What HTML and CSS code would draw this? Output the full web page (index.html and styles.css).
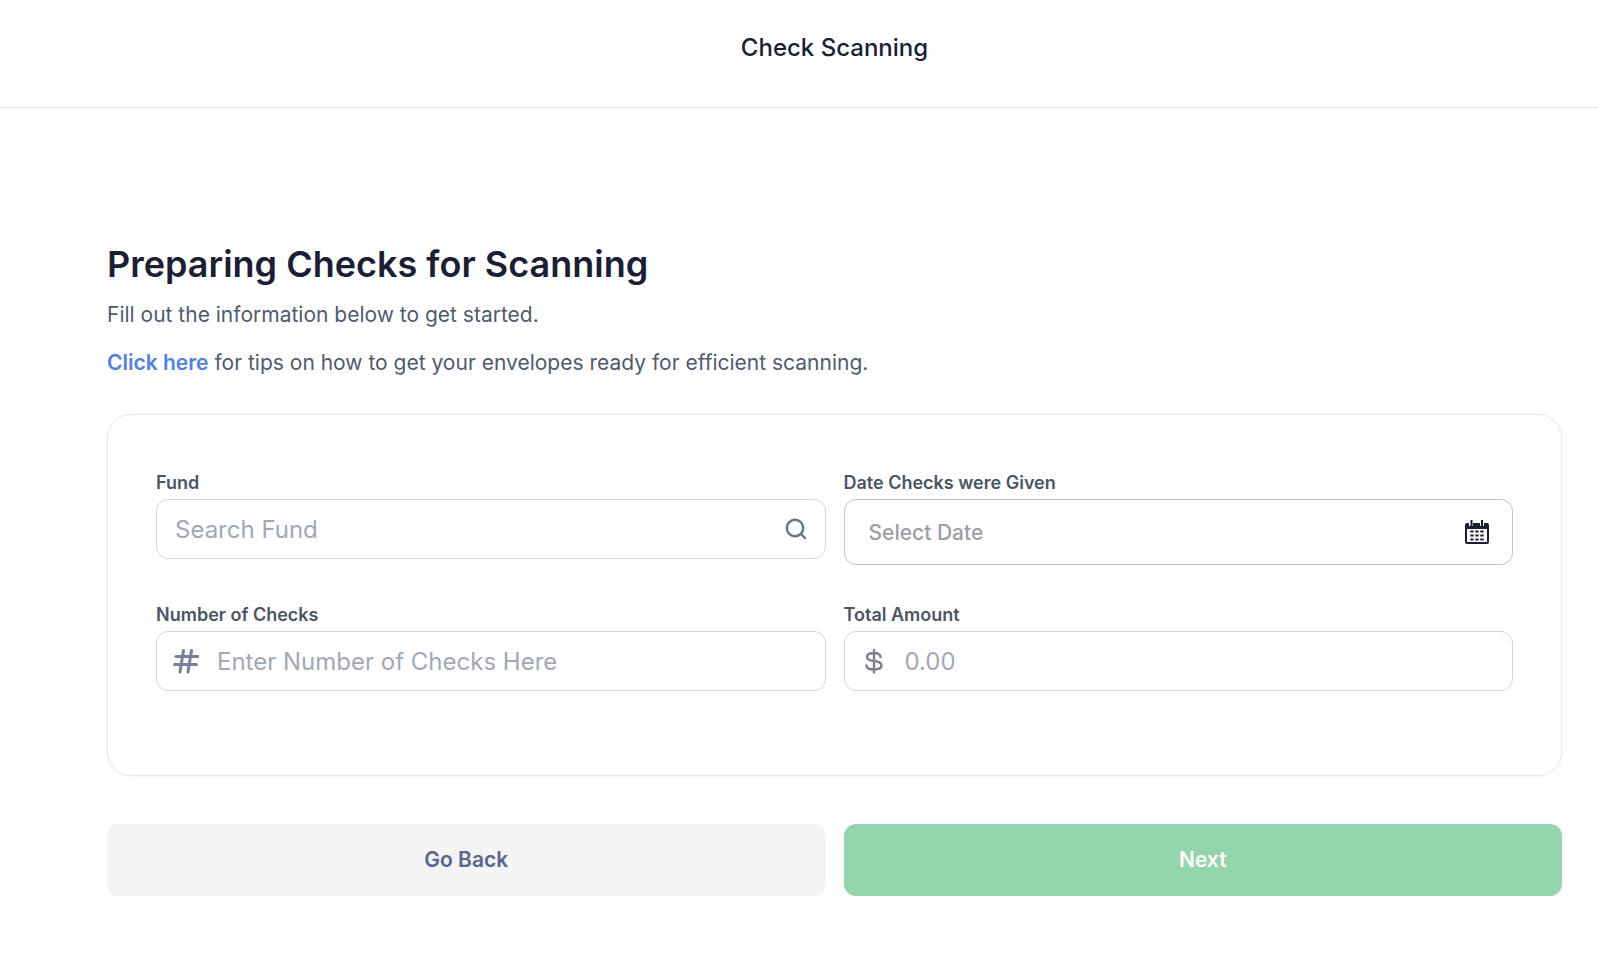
FILE: index.html
```html
<!DOCTYPE html>
<html lang="en">
<head>
<meta charset="utf-8">
<meta name="viewport" content="width=device-width, initial-scale=1">
<title>Check Scanning</title>
<link rel="stylesheet" href="styles.css">
</head>
<body>
<header class="topbar">
  <p class="topbar-title">Check Scanning</p>
</header>
<main class="page">
  <h1 class="heading">Preparing Checks for Scanning</h1>
  <p class="text">Fill out the information below to get started.</p>
  <p class="text"><a class="link" href="#tips">Click here</a> for tips on how to get your envelopes ready for efficient scanning.</p>
  <form class="form">
    <div class="card">
      <div class="field">
        <label class="label" for="fund">Fund</label>
        <div class="control control-search">
          <input class="input" id="fund" type="text" placeholder="Search Fund">
          <svg class="icon icon-search" viewBox="0 0 24 24" aria-hidden="true"><circle cx="11" cy="11" r="8.200"/><path d="M21 21l-4-4"/></svg>
        </div>
      </div>
      <div class="field">
        <label class="label" for="date">Date Checks were Given</label>
        <div class="control control-date">
          <input class="input" id="date" type="text" placeholder="Select Date">
          <svg class="icon icon-calendar" viewBox="0 0 24 24" aria-hidden="true"><path fill-rule="evenodd" d="M2 3H4V6H8V3H15V6H19V3H22Q24 3 24 5V22Q24 24 22 24H2Q0 24 0 22V5Q0 3 2 3ZM2 9V22H22V9Z"/><path d="M5.500 0H7.500V9H5.500ZM16 0H18V9H16ZM4 6H8V9H4ZM15 6H19V9H15Z"/><path class="dots" d="M5.300 11.500H19M5.300 15.500H19M5.300 19.500H19"/></svg>
        </div>
      </div>
      <div class="field">
        <label class="label" for="count">Number of Checks</label>
        <div class="control control-prefixed">
          <svg class="icon icon-hash" viewBox="0 0 26 26" aria-hidden="true"><path d="M3 8.500H25M1.500 16.500H23.500M10.500 2.500L7 24M18.500 2.500L15 24"/></svg>
          <input class="input" id="count" type="text" placeholder="Enter Number of Checks Here">
        </div>
      </div>
      <div class="field">
        <label class="label" for="amount">Total Amount</label>
        <div class="control control-prefixed">
          <svg class="icon icon-dollar" viewBox="0 0 26 26" aria-hidden="true"><path d="M13 2V24.500M19.500 9C19.500 6.500 17 5 13 5S6 6.500 6 9S8 12.500 13 13S20.500 14.500 20.500 17.500S18 21.500 13 21.500S5.500 20.500 5.500 17.500"/></svg>
          <input class="input" id="amount" type="text" placeholder="0.00">
        </div>
      </div>
    </div>
    <div class="actions">
      <button class="button button-back" type="button">Go Back</button>
      <button class="button button-next" type="submit">Next</button>
    </div>
  </form>
</main>
</body>
</html>
```
FILE: styles.css
```css
* { box-sizing: border-box; }
body { margin: 0; background: #fff; color: #1a1f36; font-family: Inter, "Liberation Sans", sans-serif; }
h1, p { margin: 0; }

.topbar { padding: 30px 0 41px 71px; border-bottom: 1px solid #e5e7eb; text-align: center; }
.topbar-title { font-size: 24px; line-height: 36px; font-weight: 500; }

.page { padding: 132px 36px 58px 107px; }
.heading { font-size: 36px; line-height: 48px; font-weight: 600; }
.text { margin-top: 12px; font-size: 21px; line-height: 36px; color: #4f5b6e; }
.heading + .text { margin-top: 9px; }
.link { color: #4f80f0; font-weight: 600; text-decoration: none; }

.card { display: grid; grid-template-columns: 1fr 1fr; gap: 36px 18px; margin-top: 33px; padding: 54px 48px 84px; border: 1px solid #e5e7eb; border-radius: 24px; box-shadow: 0 1px 3px rgba(0, 0, 0, 0.05); }
.field { display: flex; flex-direction: column; gap: 2px; min-width: 0; }
.label { align-self: flex-start; font-size: 18px; line-height: 28px; font-weight: 600; color: #4b5563; }
.control { display: flex; align-items: center; height: 60px; padding: 0 18px; border: 1px solid #d5d5d8; border-radius: 12px; }
.control-search { padding-right: 17px; }
.control-prefixed { padding-left: 16px; }
.control-date { height: 66px; padding: 0 23px 0 24px; border-color: #c0c0d0; }
.input { flex: 1; min-width: 0; padding: 2px 0 0; border: 0; outline: 0; background: transparent; color: #1a1f36; font: 400 24px/36px Inter, "Liberation Sans", sans-serif; }
.input::placeholder { color: #a1a8b6; opacity: 1; }
.control-date .input { font-size: 21px; font-weight: 500; }
.control-date .input::placeholder { color: #9d9da6; }

.icon { flex: none; fill: none; stroke-linecap: round; stroke-linejoin: round; }
.icon-search { width: 24px; height: 24px; stroke: #64748b; stroke-width: 2.4; }
.icon-calendar { width: 24px; height: 24px; fill: #1a1f36; }
.dots { stroke: #1a1f36; stroke-width: 2; stroke-linecap: butt; stroke-dasharray: 3.3 1.7; }
.icon-hash, .icon-dollar { width: 26px; height: 26px; margin-right: 18px; }
.icon-hash { stroke: #74809d; stroke-width: 3; }
.icon-dollar { stroke: #80808a; stroke-width: 2.4; }

.actions { display: grid; grid-template-columns: 1fr 1fr; gap: 18px; margin-top: 48px; }
.button { height: 72px; border: 0; border-radius: 12px; font: 600 21px/30px Inter, "Liberation Sans", sans-serif; }
.button-back { background: #f4f4f4; color: #5c6490; }
.button-next { background: #94d5ab; color: #fff; }
```
